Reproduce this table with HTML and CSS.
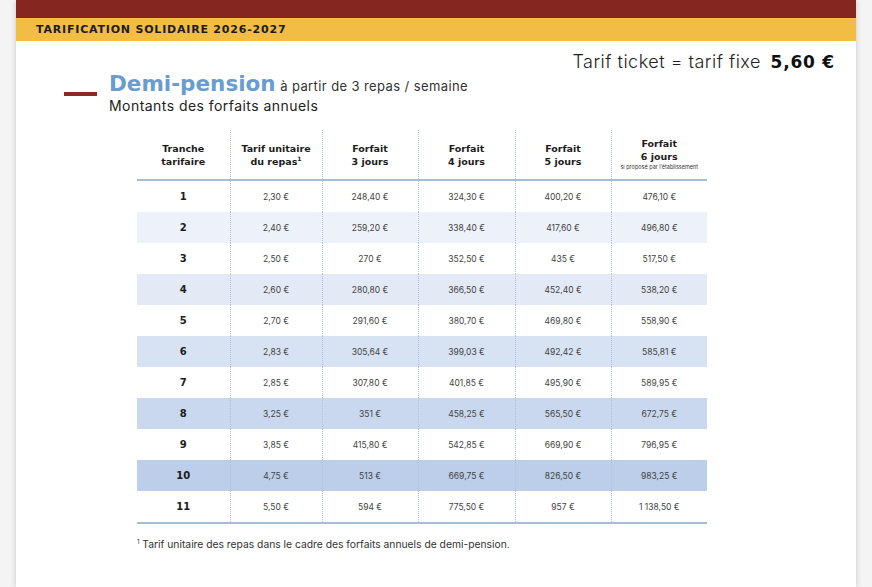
FILE: index.html
```html
<!DOCTYPE html>
<html lang="fr">
<head>
<meta charset="utf-8">
<title>Tarification solidaire 2026-2027</title>
<link rel="stylesheet" href="styles.css">
</head>
<body>
<div class="page">
  <div class="topbar"></div>
  <div class="band">TARIFICATION SOLIDAIRE 2026-2027</div>
  <div class="ticket">Tarif ticket = tarif fixe <strong>5,60&nbsp;€</strong></div>
  <div class="title">
    <span class="dash"></span>
    <div class="title-text">
      <div class="line1"><span class="big">Demi-pension</span> <span class="sub">à partir de 3 repas / semaine</span></div>
      <div class="line2">Montants des forfaits annuels</div>
    </div>
  </div>
  <table class="tarifs">
    <colgroup>
      <col class="c1"><col class="c2"><col class="c3"><col class="c4"><col class="c5"><col class="c6">
    </colgroup>
    <thead>
      <tr>
        <th>Tranche<br>tarifaire</th>
        <th>Tarif unitaire<br>du repas<sup>1</sup></th>
        <th>Forfait<br>3 jours</th>
        <th>Forfait<br>4 jours</th>
        <th>Forfait<br>5 jours</th>
        <th class="six">Forfait<br>6 jours<span class="note">si proposé par l’établissement</span></th>
      </tr>
    </thead>
    <tbody>
      <tr class="r1"><td>1</td><td>2,30 €</td><td>248,40 €</td><td>324,30 €</td><td>400,20 €</td><td>476,10 €</td></tr>
      <tr class="r2"><td>2</td><td>2,40 €</td><td>259,20 €</td><td>338,40 €</td><td>417,60 €</td><td>496,80 €</td></tr>
      <tr class="r3"><td>3</td><td>2,50 €</td><td>270 €</td><td>352,50 €</td><td>435 €</td><td>517,50 €</td></tr>
      <tr class="r4"><td>4</td><td>2,60 €</td><td>280,80 €</td><td>366,50 €</td><td>452,40 €</td><td>538,20 €</td></tr>
      <tr class="r5"><td>5</td><td>2,70 €</td><td>291,60 €</td><td>380,70 €</td><td>469,80 €</td><td>558,90 €</td></tr>
      <tr class="r6"><td>6</td><td>2,83 €</td><td>305,64 €</td><td>399,03 €</td><td>492,42 €</td><td>585,81 €</td></tr>
      <tr class="r7"><td>7</td><td>2,85 €</td><td>307,80 €</td><td>401,85 €</td><td>495,90 €</td><td>589,95 €</td></tr>
      <tr class="r8"><td>8</td><td>3,25 €</td><td>351 €</td><td>458,25 €</td><td>565,50 €</td><td>672,75 €</td></tr>
      <tr class="r9"><td>9</td><td>3,85 €</td><td>415,80 €</td><td>542,85 €</td><td>669,90 €</td><td>796,95 €</td></tr>
      <tr class="r10"><td>10</td><td>4,75 €</td><td>513 €</td><td>669,75 €</td><td>826,50 €</td><td>983,25 €</td></tr>
      <tr class="r11"><td>11</td><td>5,50 €</td><td>594 €</td><td>775,50 €</td><td>957 €</td><td>1 138,50 €</td></tr>
    </tbody>
  </table>
  <p class="footnote"><sup>1</sup> Tarif unitaire des repas dans le cadre des forfaits annuels de demi-pension.</p>
</div>
</body>
</html>
```

FILE: styles.css
```css
html, body {
  margin: 0;
  padding: 0;
}
body {
  background: #f4f4f4;
  font-family: "Inter", "Liberation Sans", sans-serif;
  color: #222;
  overflow: hidden;
  height: 587px;
}
.page {
  margin-left: 16px;
  width: 840px;
  height: 587px;
  background: #fff;
  box-shadow: 0 0 6px rgba(0, 0, 0, 0.18);
}
.topbar {
  height: 18px;
  background: #852620;
}
.band {
  height: 23px;
  background: #f2bd44;
  padding-left: 20px;
  font-family: "DejaVu Sans", sans-serif;
  font-weight: bold;
  font-size: 11px;
  line-height: 24px;
  color: #1c1c1c;
  letter-spacing: 0.8px;
}
.ticket {
  text-align: right;
  padding-right: 21px;
  margin-top: 10px;
  font-size: 18px;
  line-height: 22px;
  color: #222;
  font-weight: 300;
  letter-spacing: 0.5px;
}
.ticket strong {
  font-family: "DejaVu Sans", sans-serif;
  font-weight: bold;
  font-size: 17px;
  color: #111;
  margin-left: 4px;
  letter-spacing: 0.8px;
}
.title {
  display: flex;
  align-items: center;
  padding-left: 48px;
  margin-top: -1px;
}
.dash {
  width: 33px;
  height: 4px;
  background: #8a2a22;
  margin-right: 12px;
  margin-top: 1px;
}
.line1 {
  line-height: 24px;
  white-space: nowrap;
}
.big {
  font-family: "DejaVu Sans", sans-serif;
  font-weight: bold;
  font-size: 21.5px;
  color: #6a9bd1;
}
.sub {
  font-size: 13px;
  color: #333;
  letter-spacing: 0.4px;
}
.line2 {
  font-size: 14px;
  line-height: 16px;
  color: #222;
  letter-spacing: 0.45px;
}
.tarifs {
  margin-left: 121px;
  margin-top: 16px;
  border-collapse: collapse;
  table-layout: fixed;
  width: 570px;
  border-bottom: 2px solid #a8bcd5;
}
.c1 { width: 93px; }
.c2 { width: 92px; }
.c3 { width: 96px; }
.c4 { width: 97px; }
.c5 { width: 96px; }
.c6 { width: 96px; }
.tarifs th {
  height: 49px;
  padding: 0;
  font-family: "DejaVu Sans", sans-serif;
  font-weight: bold;
  font-size: 9.5px;
  line-height: 13px;
  color: #1c1c1c;
  vertical-align: middle;
  border-bottom: 2px solid #a8bcd5;
}
.tarifs th sup {
  font-size: 6px;
  line-height: 0;
}
.tarifs th .note {
  display: block;
  font-family: "Inter", sans-serif;
  font-weight: normal;
  font-size: 5.5px;
  line-height: 9px;
  color: #333;
}
.tarifs th + th,
.tarifs td + td {
  border-left: 1px dotted #aec0d8;
}
.tarifs td {
  height: 31px;
  padding: 0;
  text-align: center;
  font-size: 8.5px;
  color: #444;
}
.tarifs td:first-child {
  font-family: "DejaVu Sans", sans-serif;
  font-weight: bold;
  font-size: 10px;
  color: #1c1c1c;
}
.r2 { background: #edf1f9; }
.r4 { background: #e3e9f5; }
.r6 { background: #d7e2f3; }
.r8 { background: #c9d8ef; }
.r10 { background: #bccee9; }
.footnote {
  margin: 14px 0 0 121px;
  font-size: 10.3px;
  color: #333;
}
.footnote sup {
  font-size: 6px;
}
```
